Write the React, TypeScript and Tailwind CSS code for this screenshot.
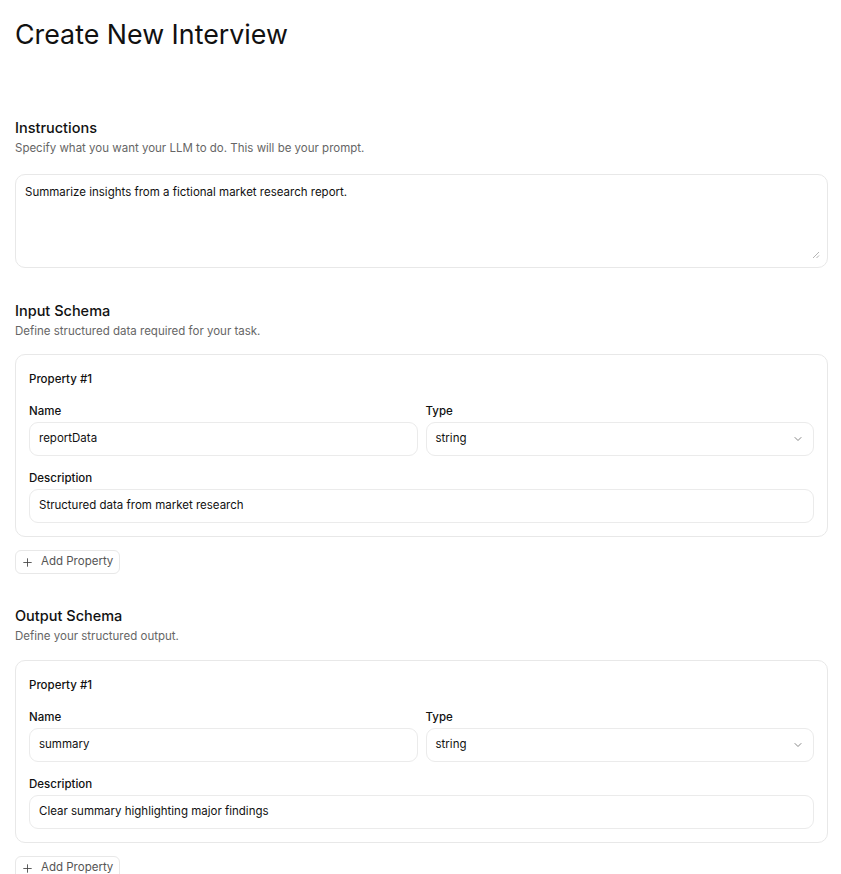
import { ChevronDown, Plus } from 'lucide-react'

type Property = { name: string; type: string; description: string }

function PropertyCard({ index, property }: { index: number; property: Property }) {
  return (
    <div className="rounded-[10px] border border-[#e8e8e8] px-[13px] pt-[16px] pb-[13px]">
      <p className="text-[11.5px] leading-4 font-medium text-[#111]">Property #{index}</p>
      <div className="mt-4 grid grid-cols-2 gap-2">
        <div>
          <label className="block text-[11.5px] leading-4 font-medium text-[#111]">Name</label>
          <div className="mt-[3px] flex h-[34px] items-center rounded-[9px] border border-[#ebebeb] px-[9px] text-[11.5px] text-[#111]">
            {property.name}
          </div>
        </div>
        <div>
          <label className="block text-[11.5px] leading-4 font-medium text-[#111]">Type</label>
          <div className="mt-[3px] flex h-[34px] items-center justify-between rounded-[9px] border border-[#ebebeb] px-[9px] text-[11.5px] text-[#111]">
            <span>{property.type}</span>
            <ChevronDown className="size-[12px] text-[#888]" strokeWidth={2} aria-hidden />
          </div>
        </div>
      </div>
      <label className="mt-[14px] block text-[11.5px] leading-4 font-medium text-[#111]">Description</label>
      <div className="mt-[3px] flex h-[34px] items-center rounded-[9px] border border-[#ebebeb] px-[9px] text-[11.5px] text-[#111]">
        {property.description}
      </div>
    </div>
  )
}

function AddPropertyButton() {
  return (
    <button className="mt-[13px] flex h-6 items-center gap-[7px] rounded-[6px] border border-[#e8e8e8] pr-[6px] pl-[5px] text-[11.5px] text-[#555]">
      <Plus className="size-[13px] text-[#444]" strokeWidth={1.6} aria-hidden />
      Add Property
    </button>
  )
}

function SectionHeader({ title, subtitle }: { title: string; subtitle: string }) {
  return (
    <div>
      <h2 className="text-[14.5px] leading-6 font-medium text-[#111]">{title}</h2>
      <p className="text-[11.5px] leading-4 text-[#666]">{subtitle}</p>
    </div>
  )
}

export default function App() {
  const input: Property = {
    name: 'reportData',
    type: 'string',
    description: 'Structured data from market research',
  }
  const output: Property = {
    name: 'summary',
    type: 'string',
    description: 'Clear summary highlighting major findings',
  }

  return (
    <div
      className="min-h-screen bg-white pt-[17px] pr-[13px] pl-[15px] text-[#111]"
      style={{ fontFamily: 'Inter, "Noto Sans", sans-serif' }}
    >
      <h1 className="text-[26.8px] leading-[35px] font-normal">Create New Interview</h1>

      <section className="mt-[64px]">
        <SectionHeader title="Instructions" subtitle="Specify what you want your LLM to do. This will be your prompt." />
        <div className="relative mt-[18px]">
          <textarea
            className="block h-[94px] w-full resize-none rounded-[10px] border border-[#e8e8e8] px-[9px] py-[9px] text-[11.5px] leading-4 text-[#111] outline-none"
            defaultValue="Summarize insights from a fictional market research report."
          />
          <svg
            className="pointer-events-none absolute right-[8px] bottom-[9px]"
            width="8"
            height="8"
            viewBox="0 0 8 8"
            aria-hidden
          >
            <path d="M7 1 1 7M7 4.5 4.5 7" stroke="#b5b5b5" strokeWidth="1" fill="none" />
          </svg>
        </div>
      </section>

      <section className="mt-[31px]">
        <SectionHeader title="Input Schema" subtitle="Define structured data required for your task." />
        <div className="mt-[15px]">
          <PropertyCard index={1} property={input} />
        </div>
        <AddPropertyButton />
      </section>

      <section className="mt-[30px] pb-10">
        <SectionHeader title="Output Schema" subtitle="Define your structured output." />
        <div className="mt-[16px]">
          <PropertyCard index={1} property={output} />
        </div>
        <AddPropertyButton />
      </section>
    </div>
  )
}
